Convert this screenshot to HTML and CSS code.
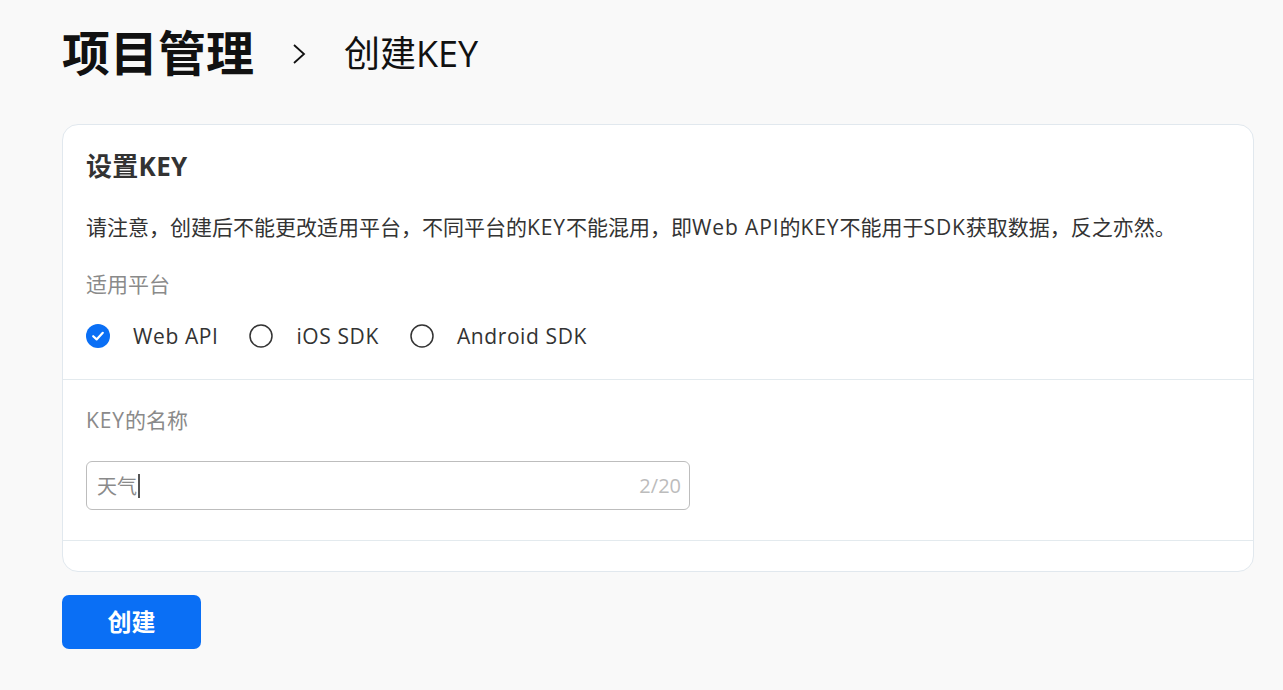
FILE: index.html
```html
<!DOCTYPE html>
<html lang="zh-CN">
<head>
<meta charset="utf-8">
<title>创建KEY</title>
<link rel="stylesheet" href="styles.css">
</head>
<body>
<div class="page">
  <header class="crumbs">
    <h1 class="crumb-root">项目管理</h1>
    <svg class="crumb-sep" width="14" height="22" viewBox="0 0 14 22"><polyline points="2,2 12,11 2,20" fill="none" stroke="#111" stroke-width="1.8"/></svg>
    <span class="crumb-current">创建KEY</span>
  </header>

  <section class="card">
    <div class="card-section first">
      <h2 class="card-title">设置KEY</h2>
      <p class="notice">请注意，创建后不能更改适用平台，不同平台的<span class="lat">KEY</span>不能混用，即<span class="lat">Web API</span>的<span class="lat">KEY</span>不能用于<span class="lat">SDK</span>获取数据，反之亦然。</p>
      <div class="field-label">适用平台</div>
      <div class="radios">
        <label class="radio checked">
          <span class="dot"><svg width="24" height="24" viewBox="0 0 24 24"><circle cx="12" cy="12" r="12" fill="#0a6ff5"/><polyline points="7.2,12.2 10.6,15.4 16.8,8.8" fill="none" stroke="#fff" stroke-width="2.2" stroke-linecap="round" stroke-linejoin="round"/></svg></span>
          <span class="radio-text">Web API</span>
        </label>
        <label class="radio">
          <span class="dot"><svg width="24" height="24" viewBox="0 0 24 24"><circle cx="12" cy="12" r="11" fill="#fff" stroke="#333" stroke-width="1.5"/></svg></span>
          <span class="radio-text">iOS SDK</span>
        </label>
        <label class="radio">
          <span class="dot"><svg width="24" height="24" viewBox="0 0 24 24"><circle cx="12" cy="12" r="11" fill="#fff" stroke="#333" stroke-width="1.5"/></svg></span>
          <span class="radio-text">Android SDK</span>
        </label>
      </div>
    </div>
    <div class="card-section second">
      <div class="field-label"><span class="lat">KEY</span>的名称</div>
      <div class="input">
        <span class="input-value">天气<span class="caret"></span></span>
        <span class="counter">2/20</span>
      </div>
    </div>
    <div class="card-section third"></div>
  </section>

  <button class="primary-btn" type="button">创建</button>
</div>
</body>
</html>
```

FILE: styles.css
```css
html, body {
  margin: 0;
  padding: 0;
  background: #f9f9f9;
}
body {
  font-family: "Open Sans", "Noto Sans CJK SC", sans-serif;
  color: #333;
}
.page {
  padding: 16px 29px 0 62px;
}
.crumbs {
  display: flex;
  align-items: center;
  height: 76px;
}
.crumb-root {
  margin: 0 0 8px;
  font-family: "Noto Sans CJK SC", sans-serif;
  font-size: 48px;
  font-weight: 700;
  line-height: 60px;
  color: #111;
}
.crumb-sep {
  margin-left: 38px;
  margin-right: 38px;
  display: block;
}
.crumb-current {
  font-size: 36px;
  line-height: 48px;
  color: #111;
  font-weight: 400;
}
.card {
  margin-top: 32px;
  background: #fff;
  border: 1px solid #e1e8ee;
  border-radius: 16px;
}
.card-section {
  padding: 0 24px 0 23px;
}
.card-section.first {
  padding-top: 23px;
  padding-bottom: 28px;
  border-bottom: 1px solid #e3eaee;
}
.card-section.second {
  padding-top: 25px;
  padding-bottom: 30px;
  border-bottom: 1px solid #e3eaee;
}
.card-section.third {
  height: 30px;
}
.card-title {
  margin: 0;
  font-size: 26px;
  line-height: 36px;
  font-weight: 700;
  letter-spacing: 0.3px;
  color: #333;
}
.notice {
  margin: 28px 0 0;
  font-size: 21px;
  line-height: 30px;
  color: #333;
}
.lat {
  letter-spacing: 0.9px;
}
.field-label {
  font-size: 21px;
  line-height: 30px;
  color: #8a8a8a;
}
.first .field-label {
  margin-top: 27px;
}
.radios {
  display: flex;
  align-items: center;
  gap: 31px;
  margin-top: 22px;
  height: 30px;
}
.radio {
  display: flex;
  align-items: center;
  gap: 23px;
  font-size: 21px;
  line-height: 30px;
  letter-spacing: 0.6px;
  color: #333;
}
.dot {
  display: block;
  width: 24px;
  height: 24px;
}
.dot svg {
  display: block;
}
.input {
  margin-top: 26px;
  width: 604px;
  height: 49px;
  box-sizing: border-box;
  border: 1px solid #bdbdbd;
  border-radius: 6px;
  display: flex;
  align-items: center;
  justify-content: space-between;
  padding: 0 8px 0 10px;
  font-size: 20px;
  background: #fff;
}
.input-value {
  color: #8a8a8a;
  display: flex;
  align-items: center;
}
.caret {
  display: inline-block;
  width: 2px;
  height: 24px;
  background: #555;
  margin-left: 1px;
}
.counter {
  color: #bcbcbc;
}
.primary-btn {
  margin-top: 23px;
  width: 139px;
  height: 54px;
  border: none;
  border-radius: 7px;
  background: #0a6ff5;
  color: #fff;
  font-family: "Noto Sans CJK SC", sans-serif;
  font-size: 24px;
  font-weight: 700;
  line-height: 30px;
  padding: 0 0 2px;
  cursor: pointer;
}
```
